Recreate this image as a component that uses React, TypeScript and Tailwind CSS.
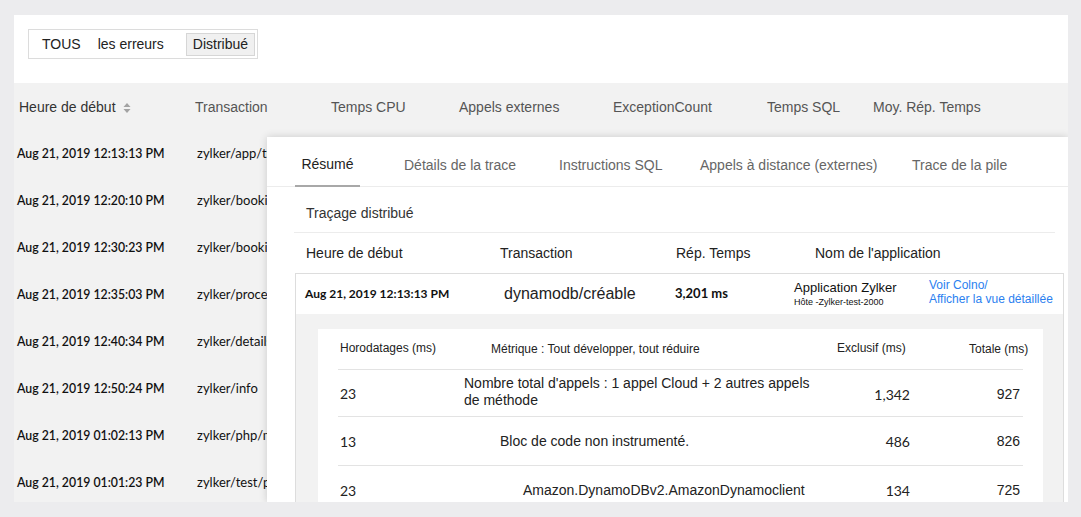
import React from "react";

const rows = [
  { time: "Aug 21, 2019 12:13:13 PM", tx: "zylker/app/transfer" },
  { time: "Aug 21, 2019 12:20:10 PM", tx: "zylker/bookings" },
  { time: "Aug 21, 2019 12:30:23 PM", tx: "zylker/bookings/new" },
  { time: "Aug 21, 2019 12:35:03 PM", tx: "zylker/process" },
  { time: "Aug 21, 2019 12:40:34 PM", tx: "zylker/details" },
  { time: "Aug 21, 2019 12:50:24 PM", tx: "zylker/info" },
  { time: "Aug 21, 2019 01:02:13 PM", tx: "zylker/php/main" },
  { time: "Aug 21, 2019 01:01:23 PM", tx: "zylker/test/page" },
];

const headers = [
  { label: "Transaction", w: "w-[136px]" },
  { label: "Temps CPU", w: "w-[128px]" },
  { label: "Appels externes", w: "w-[154px]" },
  { label: "ExceptionCount", w: "w-[154px]" },
  { label: "Temps SQL", w: "w-[106px]" },
  { label: "Moy. Rép. Temps", w: "w-[150px]" },
];

const SortIcon = () => (
  <svg width="8" height="12" viewBox="0 0 8 12" className="ml-[7px]">
    <path d="M4 1 L7.5 5 H0.5 Z" fill="#a3a3a3" />
    <path d="M4 11 L7.5 7 H0.5 Z" fill="#a3a3a3" />
  </svg>
);

const metrics = [
  {
    ts: "23",
    label: "Nombre total d'appels : 1 appel Cloud + 2 autres appels de méthode",
    indent: "pl-0",
    excl: "1,342",
    total: "927",
    h: "h-[47px]",
  },
  {
    ts: "13",
    label: "Bloc de code non instrumenté.",
    indent: "pl-[36px]",
    excl: "486",
    total: "826",
    h: "h-[49px]",
  },
  {
    ts: "23",
    label: "Amazon.DynamoDBv2.AmazonDynamoclient",
    indent: "pl-[59px]",
    excl: "134",
    total: "725",
    h: "h-[49px]",
  },
];

const DetailPanel = () => (
  <div className="absolute left-[253px] top-[122px] right-0 bottom-0 bg-white shadow-[0_0_8px_rgba(0,0,0,0.16)] font-['Liberation_Sans',Arial,sans-serif]">
    {/* tabs */}
    <div className="flex h-[50px] items-stretch border-b border-[#ececec] text-[14px] text-[#666]">
      <div className="ml-[28px] w-[65px] pt-[7px] flex items-center justify-center border-b-2 border-[#a8a8a8] -mb-px text-[#222]">
        Résumé
      </div>
      <div className="ml-[44px] w-[155px] pt-[7px] flex items-center">Détails de la trace</div>
      <div className="w-[141px] pt-[7px] flex items-center">Instructions SQL</div>
      <div className="w-[212px] pt-[7px] flex items-center">Appels à distance (externes)</div>
      <div className="pt-[7px] flex items-center">Trace de la pile</div>
    </div>

    <div className="ml-[27px] mr-[13px] h-[46px] pt-[7px] flex items-center pl-[12px] border-b border-[#ececec] text-[14px] text-[#333]">
      Traçage distribué
    </div>

    <div className="ml-[27px] h-[40px] flex items-center text-[14px] text-[#222]">
      <div className="pl-[12px] w-[206px]">Heure de début</div>
      <div className="w-[176px]">Transaction</div>
      <div className="w-[139px]">Rép. Temps</div>
      <div>Nom de l'application</div>
    </div>

    <div className="ml-[28px] w-[769px] border border-[#dddddd]">
      <div className="h-[40px] flex items-center">
        <div className="pl-[9px] w-[208px] font-['Lato',sans-serif] font-bold text-[12px] text-[#111]">
          Aug 21, 2019 12:13:13 PM
        </div>
        <div className="w-[171px] text-[16px] text-[#222]">dynamodb/créable</div>
        <div className="w-[119px] font-['Lato',sans-serif] font-bold text-[13px] text-[#111]">
          3,201 ms
        </div>
        <div className="w-[135px] text-[#111]">
          <div className="text-[13px] leading-[15px]">Application Zylker</div>
          <div className="text-[9px] leading-[12px] mt-[1px]">Hôte -Zylker-test-2000</div>
        </div>
        <div className="text-[12px] leading-[14px] text-[#2b7ff0] -mt-[4px]">
          <div>Voir Colno/</div>
          <div>Afficher la vue détaillée</div>
        </div>
      </div>

      <div className="bg-[#f2f2f2] pt-[15px] pl-[22px] pr-[20px] h-[200px]">
        <div className="bg-white h-full">
          <div className="flex h-[41px] items-center border-b border-[#e3e3e3] mx-[20px] text-[12px] text-[#222] whitespace-nowrap">
            <div className="flex-none w-[153px] pl-[2px] -mt-[2px]">Horodatages (ms)</div>
            <div className="flex-none w-[346px]">Métrique : Tout développer, tout réduire</div>
            <div className="flex-none w-[132px] -mt-[2px]">Exclusif (ms)</div>
            <div className="flex-none">Totale (ms)</div>
          </div>
          {metrics.map((m, i) => (
            <div
              key={i}
              className={`flex items-center ${m.h} mx-[20px] border-b border-[#e3e3e3] text-[14px] text-[#222]`}
            >
              <div className="flex-none w-[126px] pl-[2px] font-['Lato',sans-serif]">{m.ts}</div>
              <div className={`flex-none w-[352px] leading-[17px] ${m.indent} ${i === 0 ? "-mt-[2px]" : "whitespace-nowrap"}`}>
                {m.label}
              </div>
              <div className={`flex-none w-[94px] text-right font-['Lato',sans-serif] ${i === 0 ? "mt-[3px]" : ""}`}>
                {m.excl}
              </div>
              <div className={`flex-none w-[110px] text-right ${i === 0 ? "mt-[3px]" : ""}`}>{m.total}</div>
            </div>
          ))}
        </div>
      </div>
    </div>
  </div>
);

export default function App() {
  return (
    <div className="min-h-screen bg-[#ececee] pt-[15px] pl-[14px] pr-[13px]">
      <div className="relative h-[487px] overflow-hidden bg-[#f2f2f2] font-['Liberation_Sans',Arial,sans-serif]">
        <div className="bg-white h-[68px] pt-[14px] pl-[14px]">
          <div className="w-[230px] h-[30px] border border-[#dcdcdc] flex items-center text-[14px] text-[#222]">
            <span className="ml-[13px]">TOUS</span>
            <span className="ml-[17px]">les erreurs</span>
            <span className="ml-[22px] h-[23px] px-[6px] flex items-center bg-[#f0f0f0] border border-[#d6d6d6]">
              Distribué
            </span>
          </div>
        </div>

        <div className="h-[45px] pt-[4px] flex items-center text-[14px] text-[#555]">
          <div className="pl-[5px] w-[181px] flex items-center text-[#333]">
            Heure de début
            <SortIcon />
          </div>
          {headers.map((h) => (
            <div key={h.label} className={`${h.w} flex-none`}>
              {h.label}
            </div>
          ))}
        </div>

        <div className="pt-[3px]">
          {rows.map((r) => (
            <div key={r.time} className="h-[47px] flex items-center text-[13px] text-[#111]">
              <div className="pl-[3px] w-[183px] font-['Lato',sans-serif] font-semibold text-[12.3px]">{r.time}</div>
              <div className="font-['Lato',sans-serif] -mt-[2px]">{r.tx}</div>
            </div>
          ))}
        </div>

        <DetailPanel />
      </div>
    </div>
  );
}
